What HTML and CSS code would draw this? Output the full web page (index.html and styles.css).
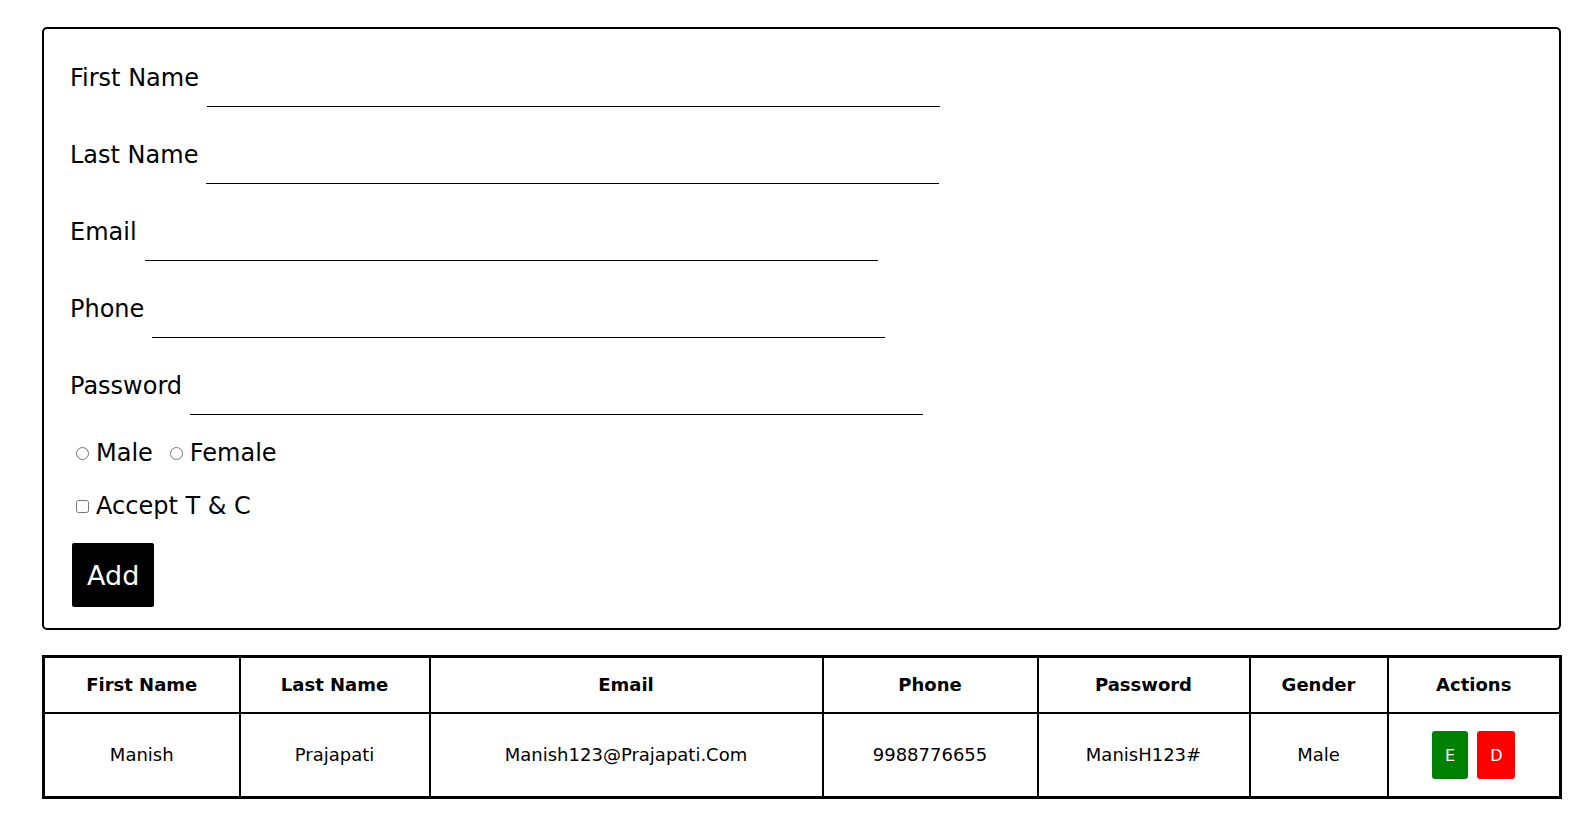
FILE: index.html
```html
<!DOCTYPE html>
<html lang="en">
<head>
<meta charset="utf-8">
<title>User Form</title>
<link rel="stylesheet" href="styles.css">
</head>
<body>
<main class="page">
  <form class="user-form">
    <div class="fields">
      <div class="field">
        <label class="field-label" for="fn">First Name</label>
        <input class="field-input" id="fn" type="text">
      </div>
      <div class="field">
        <label class="field-label" for="ln">Last Name</label>
        <input class="field-input" id="ln" type="text">
      </div>
      <div class="field">
        <label class="field-label" for="em">Email</label>
        <input class="field-input" id="em" type="email">
      </div>
      <div class="field">
        <label class="field-label" for="ph">Phone</label>
        <input class="field-input" id="ph" type="text">
      </div>
      <div class="field">
        <label class="field-label" for="pw">Password</label>
        <input class="field-input" id="pw" type="password">
      </div>
    </div>
    <div class="choice-row gender-row">
      <label class="choice"><input class="radio" type="radio" name="gender"><span>Male</span></label>
      <label class="choice choice-second"><input class="radio" type="radio" name="gender"><span>Female</span></label>
    </div>
    <div class="choice-row terms-row">
      <label class="choice"><input class="checkbox" type="checkbox"><span>Accept T &amp; C</span></label>
    </div>
    <button class="add-btn" type="button">Add</button>
  </form>

  <table class="data-table">
    <colgroup>
      <col class="c-first">
      <col class="c-last">
      <col class="c-email">
      <col class="c-phone">
      <col class="c-pass">
      <col class="c-gender">
      <col class="c-actions">
    </colgroup>
    <thead>
      <tr>
        <th>First Name</th>
        <th>Last Name</th>
        <th>Email</th>
        <th>Phone</th>
        <th>Password</th>
        <th>Gender</th>
        <th>Actions</th>
      </tr>
    </thead>
    <tbody>
      <tr>
        <td>Manish</td>
        <td>Prajapati</td>
        <td>Manish123@Prajapati.Com</td>
        <td>9988776655</td>
        <td>ManisH123#</td>
        <td>Male</td>
        <td>
          <div class="actions">
            <button class="act-btn act-edit" type="button">E</button>
            <button class="act-btn act-del" type="button">D</button>
          </div>
        </td>
      </tr>
    </tbody>
  </table>
</main>
</body>
</html>
```

FILE: styles.css
```css
* {
  box-sizing: border-box;
}

html, body {
  margin: 0;
  padding: 0;
  background: #ffffff;
}

body {
  font-family: "Comic Sans MS", "DejaVu Sans", sans-serif;
  color: #000000;
}

.page {
  padding: 27px 32px 0 42px;
}

.user-form {
  border: 2px solid #000000;
  border-radius: 5px;
  padding: 35px 26px 21px 26px;
}

.fields {
  display: flex;
  flex-direction: column;
  gap: 34px;
}

.field {
  display: flex;
  align-items: flex-end;
}

.field-label {
  font-size: 24px;
  line-height: 28px;
  margin-bottom: 15px;
}

.field-input {
  width: 733px;
  height: 43px;
  margin-left: 8px;
  border: none;
  border-bottom: 1px solid #000000;
  outline: none;
  background: transparent;
  font-family: inherit;
  font-size: 16px;
  padding: 0 4px;
}

.choice-row {
  display: flex;
  align-items: center;
  font-size: 24px;
  line-height: 28px;
}

.gender-row {
  margin-top: 24px;
}

.terms-row {
  margin-top: 25px;
}

.choice {
  display: flex;
  align-items: center;
}

.choice-second {
  margin-left: 11px;
}

.radio,
.checkbox {
  width: 13px;
  height: 13px;
  margin: 0 7px 0 6px;
}

.add-btn {
  display: block;
  margin: 23px 0 0 2px;
  height: 64px;
  padding: 0 15px;
  border: none;
  border-radius: 2px;
  background: #000000;
  color: #ffffff;
  font-family: inherit;
  font-size: 27px;
}

.data-table {
  margin-top: 25px;
  width: 1517px;
  border-collapse: collapse;
  table-layout: fixed;
  border: 3px solid #000000;
}

.c-first { width: 196px; }
.c-last { width: 190px; }
.c-email { width: 393px; }
.c-phone { width: 215px; }
.c-pass { width: 212px; }
.c-gender { width: 138px; }
.c-actions { width: 173px; }

.data-table th,
.data-table td {
  border: 2px solid #000000;
  text-align: center;
}

.data-table th {
  font-size: 18px;
  font-weight: bold;
  line-height: 22px;
  padding: 16px 4px;
}

.data-table td {
  font-size: 18px;
  line-height: 22px;
  padding: 17px 4px;
}

.actions {
  display: flex;
  justify-content: center;
  gap: 9px;
}

.act-btn {
  height: 48px;
  padding: 0 13px;
  border: none;
  border-radius: 3px;
  color: #ffffff;
  font-family: inherit;
  font-size: 16px;
}

.act-edit {
  background: #008000;
}

.act-del {
  background: #ff0000;
}
```
